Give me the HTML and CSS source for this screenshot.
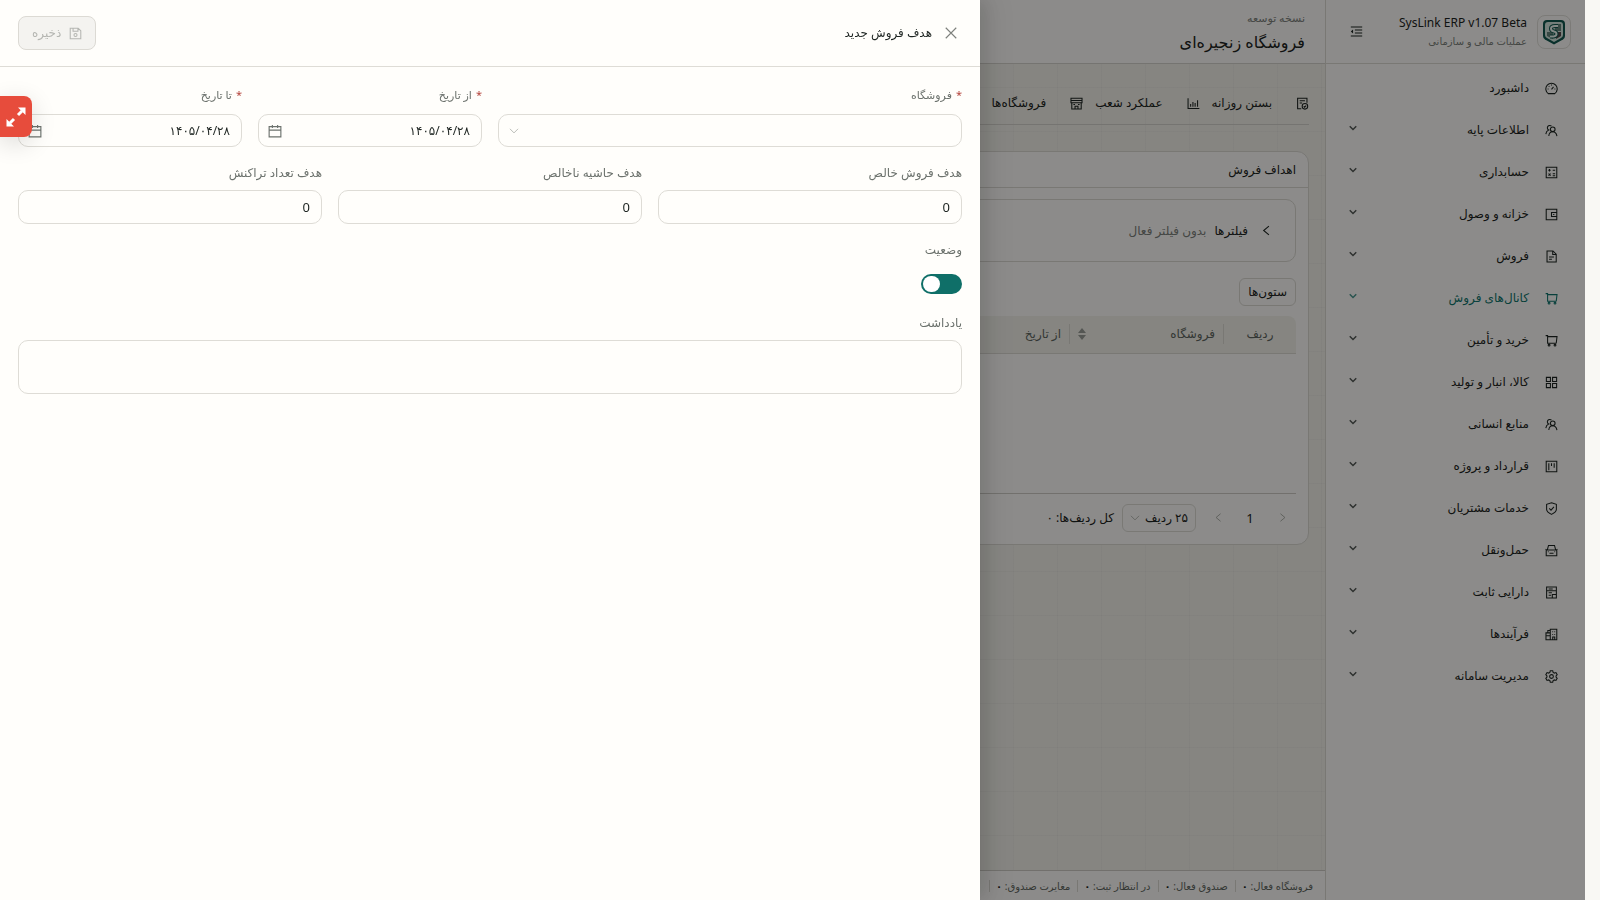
FILE: index.html
```html
<!DOCTYPE html>
<html lang="fa" dir="rtl">
<head>
  <meta charset="UTF-8">
  <title>SysLink ERP</title>
  <link rel="stylesheet" href="styles.css">
</head>
<body>
  <svg class="sprite" aria-hidden="true">
    <symbol id="i-dash" viewBox="0 0 16 16"><path d="M4 14.3a7 7 0 1 1 8 0z"/><path d="M8 9l2.5-3M8 3.2v1.2M3.2 8.5h1.2M11.6 8.5h1.2M4.6 5l.8.8"/></symbol>
    <symbol id="i-team" viewBox="0 0 16 16"><circle cx="9.5" cy="6.5" r="2.9"/><path d="M4.7 14.8c.2-3 2-5.2 4.8-5.2s4.6 2.2 5.2 5.2M8 2.6A3 3 0 1 0 4.5 7.4C2.5 8.2 1.3 10 1 12.5"/></symbol>
    <symbol id="i-calc" viewBox="0 0 16 16"><path d="M1.5 1.5h13v13h-13zM4 5.3h3M5.5 3.8v3M9.5 5.3h3M9.5 9.5h3M9.5 12h3M4.3 9.3l2.6 2.6M6.9 9.3l-2.6 2.6"/></symbol>
    <symbol id="i-wallet" viewBox="0 0 16 16"><path d="M14.5 5V1.5h-13v13h13V11M14.5 5.5v5H8v-5zM10 8h1.5"/></symbol>
    <symbol id="i-file" viewBox="0 0 16 16"><path d="M2.5 1.2h7.3l4 4v9.6H2.5zM9.5 1.5v4h4M5 8.5h6M5 11.3h3.5"/></symbol>
    <symbol id="i-cart" viewBox="0 0 16 16"><path d="M.8 2h2.4v9.5h10.3M3.4 3.2h11.4l-1 8.3"/><circle cx="5" cy="13.7" r="1.1"/><circle cx="12.3" cy="13.7" r="1.1"/></symbol>
    <symbol id="i-grid" viewBox="0 0 16 16"><path d="M1.7 1.7h5v5h-5zM9.3 1.7h5v5h-5zM1.7 9.3h5v5h-5zM9.3 9.3h5v5h-5z"/></symbol>
    <symbol id="i-project" viewBox="0 0 16 16"><path d="M1.5 1.5h13v13h-13zM4.7 4v8.5M8 4v3.5M11.3 4v5.5"/></symbol>
    <symbol id="i-shield" viewBox="0 0 16 16"><path d="M8 .9l6 2v6.3c0 2.3-3 4.5-6 6-3-1.5-6-3.7-6-6V2.9zM5.2 7.8l2.2 2.2 3.6-4"/></symbol>
    <symbol id="i-car" viewBox="0 0 16 16"><path d="M1.5 7.5v7h13v-7zM2.8 7.5l1.5-5.7h7.4l1.5 5.7M5.5 11.5h5M.7 6.5l1.3.8M15.3 6.5l-1.3.8M3.5 9.5h1M11.5 9.5h1"/></symbol>
    <symbol id="i-asset" viewBox="0 0 16 16"><path d="M2 1.2h12v13.6H2zM2 5.8h12M4.5 3.6h5M4.5 8.2h4M4.5 11.5h3M9 14.5v-4h5"/></symbol>
    <symbol id="i-flow" viewBox="0 0 16 16"><path d="M6.5 6V1.5h8v13h-8M1.2 6h5.3v8.5H1.2zM1.2 9.5h5.3M3.5 6V3h3M9 4.5h1M11.5 4.5h1M9 8h1M11.5 8h1M9.5 14v-3h2.5v3"/></symbol>
    <symbol id="i-gear" viewBox="0 0 16 16"><path d="M6.5 1h3l.5 2 1.5.8 2-.6 1.5 2.6L13.6 7.2v1.6l1.4 1.4-1.5 2.6-2-.6-1.500.8-.5 2h-3L6 13l-1.500-.8-2 .6L1 10.200l1.400-1.400V7.200L1 5.800l1.500-2.600 2 .6L6 3z"/><circle cx="8" cy="8" r="2.300"/></symbol>
    <symbol id="i-down" viewBox="0 0 16 16"><path d="M1.5 4.5L8 11l6.5-6.5"/></symbol>
    <symbol id="i-left" viewBox="0 0 16 16"><path d="M11 2.5L4.500 8l6.500 5.500"/></symbol>
    <symbol id="i-right" viewBox="0 0 16 16"><path d="M5 2.5L11.500 8 5 13.500"/></symbol>
    <symbol id="i-close" viewBox="0 0 16 16"><path d="M2 2l12 12M14 2L2 14"/></symbol>
    <symbol id="i-fold" viewBox="0 0 16 16"><path d="M1 2.5h14M6 6.2h9M6 9.8h9M1 13.5h14"/><path class="solid" d="M3.800 5.500v5L1 8z"/></symbol>
    <symbol id="i-daily" viewBox="0 0 16 16"><path d="M6.5 14.5H2v-13h11.500V7M4.500 4.500h6.500M4.500 7.500h3"/><circle cx="11" cy="11.500" r="3.400"/><path d="M9.500 11.500l1 1 2-2"/></symbol>
    <symbol id="i-chart" viewBox="0 0 16 16"><path d="M1.3 1.5v12.700h13.900M4.500 12V8.500M7.300 12V6M10 12V7.500M13 12V4"/></symbol>
    <symbol id="i-shop" viewBox="0 0 16 16"><path d="M1.2 1.5h13.600v5.500H1.200zM2.200 7v7.700h11.600V7M1.200 4.200h13.600M6.200 14.500v-3h3.600v3M4.200 9.200h2M9.800 9.200h2"/></symbol>
    <symbol id="i-cal" viewBox="0 0 16 16"><path d="M1.3 3h13.400v11.700H1.300zM1.300 7h13.400M5 1v3.500M11 1v3.500"/></symbol>
    <symbol id="i-save" viewBox="0 0 16 16"><path d="M1.5 1.5h9.800l3.200 3.200v9.800h-13zM5 1.500v3.700h6V1.500"/><circle cx="8" cy="9.800" r="1.900"/></symbol>
  </svg>

  <div class="app">
    <aside class="sidebar">
      <div class="brand">
        <div class="logo">
          <svg viewBox="0 0 24 26">
            <path d="M5 1h14q4 0 4 4v12q0 2-2 3.500L12 25.500 3 20.500Q1 19 1 17V5q0-4 4-4z" fill="#11584f"/>
            <path d="M6 3h12q3 0 3 3v10q0 2-2 3l-7 4-7-4q-2-1-2-3V6q0-3 3-3z" fill="#d3e6de"/>
            <path d="M13 5h6v7h-6zM5 13h6v7l-6-3z" fill="#65857c"/>
            <path d="M14 13h5v4l-5 3z" fill="#55484a"/>
            <path d="M16 7h-3q-4 0-4 2.500t3 3q2.500.5 2.500 2.500t-3 2.500H8" fill="none" stroke="#11584f" stroke-width="4"/>
            <path d="M16 7h-3q-4 0-4 2.500t3 3q2.500.5 2.500 2.500t-3 2.500H8" fill="none" stroke="#eef8f3" stroke-width="2"/>
          </svg>
        </div>
        <div class="brand-text">
          <strong dir="ltr">SysLink ERP v1.07 Beta</strong>
          <span>عملیات مالی و سازمانی</span>
        </div>
        <button class="icon-btn" aria-label="بستن منو"><svg class="icon"><use href="#i-fold"/></svg></button>
      </div>
      <nav class="menu">
        <a href="#"><svg class="icon"><use href="#i-dash"/></svg><span>داشبورد</span></a>
        <a href="#"><svg class="icon"><use href="#i-team"/></svg><span>اطلاعات پایه</span><svg class="arrow"><use href="#i-down"/></svg></a>
        <a href="#"><svg class="icon"><use href="#i-calc"/></svg><span>حسابداری</span><svg class="arrow"><use href="#i-down"/></svg></a>
        <a href="#"><svg class="icon"><use href="#i-wallet"/></svg><span>خزانه و وصول</span><svg class="arrow"><use href="#i-down"/></svg></a>
        <a href="#"><svg class="icon"><use href="#i-file"/></svg><span>فروش</span><svg class="arrow"><use href="#i-down"/></svg></a>
        <a href="#" class="active"><svg class="icon"><use href="#i-cart"/></svg><span>کانال‌های فروش</span><svg class="arrow"><use href="#i-down"/></svg></a>
        <a href="#"><svg class="icon"><use href="#i-cart"/></svg><span>خرید و تأمین</span><svg class="arrow"><use href="#i-down"/></svg></a>
        <a href="#"><svg class="icon"><use href="#i-grid"/></svg><span>کالا، انبار و تولید</span><svg class="arrow"><use href="#i-down"/></svg></a>
        <a href="#"><svg class="icon"><use href="#i-team"/></svg><span>منابع انسانی</span><svg class="arrow"><use href="#i-down"/></svg></a>
        <a href="#"><svg class="icon"><use href="#i-project"/></svg><span>قرارداد و پروژه</span><svg class="arrow"><use href="#i-down"/></svg></a>
        <a href="#"><svg class="icon"><use href="#i-shield"/></svg><span>خدمات مشتریان</span><svg class="arrow"><use href="#i-down"/></svg></a>
        <a href="#"><svg class="icon"><use href="#i-car"/></svg><span>حمل‌ونقل</span><svg class="arrow"><use href="#i-down"/></svg></a>
        <a href="#"><svg class="icon"><use href="#i-asset"/></svg><span>دارایی ثابت</span><svg class="arrow"><use href="#i-down"/></svg></a>
        <a href="#"><svg class="icon"><use href="#i-flow"/></svg><span>فرآیندها</span><svg class="arrow"><use href="#i-down"/></svg></a>
        <a href="#"><svg class="icon"><use href="#i-gear"/></svg><span>مدیریت سامانه</span><svg class="arrow"><use href="#i-down"/></svg></a>
      </nav>
    </aside>

    <div class="page">
      <header class="topbar">
        <span>نسخه توسعه</span>
        <h1>فروشگاه زنجیره‌ای</h1>
      </header>

      <main class="content">
        <nav class="tabs">
          <a href="#"><svg class="icon"><use href="#i-daily"/></svg>بستن روزانه</a>
          <a href="#"><svg class="icon"><use href="#i-chart"/></svg>عملکرد شعب</a>
          <a href="#"><svg class="icon"><use href="#i-shop"/></svg>فروشگاه‌ها</a>
        </nav>

        <section class="card">
          <h2>اهداف فروش</h2>
          <div class="card-body">
            <button class="filters">
              <svg class="icon"><use href="#i-left"/></svg>
              <b>فیلترها</b>
              <span>بدون فیلتر فعال</span>
            </button>
            <button class="columns-btn">ستون‌ها</button>
            <table>
              <thead>
                <tr>
                  <th class="col-row">ردیف</th>
                  <th class="col-shop"><div>فروشگاه <svg class="sorter" viewBox="0 0 8 12"><path d="M4 0l4 5H0zM4 12L0 7h8z"/></svg></div></th>
                  <th>از تاریخ</th>
                </tr>
              </thead>
              <tbody>
                <tr><td colspan="3"></td></tr>
              </tbody>
            </table>
            <div class="pager">
              <button class="page-btn" disabled aria-label="قبلی"><svg class="icon"><use href="#i-right"/></svg></button>
              <button class="page-btn">1</button>
              <button class="page-btn" disabled aria-label="بعدی"><svg class="icon"><use href="#i-left"/></svg></button>
              <div class="select-box small">
                <select aria-label="تعداد ردیف"><option>۲۵ ردیف</option></select>
                <svg><use href="#i-down"/></svg>
              </div>
              <span>کل ردیف‌ها: ۰</span>
            </div>
          </div>
        </section>
      </main>

      <footer class="statusbar">
        <span>فروشگاه فعال: <b>۰</b></span>
        <span>صندوق فعال: <b>۰</b></span>
        <span>در انتظار ثبت: <b>۰</b></span>
        <span>مغایرت صندوق: <b>۰</b></span>
        <span></span>
      </footer>
    </div>
  </div>

  <div class="mask"></div>

  <form class="drawer">
    <div class="drawer-head">
      <button type="button" class="close" aria-label="بستن"><svg class="icon"><use href="#i-close"/></svg></button>
      <h2>هدف فروش جدید</h2>
      <button class="save" disabled><svg class="icon"><use href="#i-save"/></svg>ذخیره</button>
    </div>
    <div class="fields">
      <div class="field half">
        <label class="required" for="shop">فروشگاه</label>
        <div class="select-box">
          <select id="shop"><option></option></select>
          <svg><use href="#i-down"/></svg>
        </div>
      </div>
      <div class="field quarter">
        <label class="required" for="from">از تاریخ</label>
        <div class="date-box">
          <input id="from" type="text" value="۱۴۰۵/۰۴/۲۸">
          <svg class="icon"><use href="#i-cal"/></svg>
        </div>
      </div>
      <div class="field quarter">
        <label class="required" for="to">تا تاریخ</label>
        <div class="date-box">
          <input id="to" type="text" value="۱۴۰۵/۰۴/۲۸">
          <svg class="icon"><use href="#i-cal"/></svg>
        </div>
      </div>
      <div class="field third">
        <label for="net">هدف فروش خالص</label>
        <input id="net" class="number" type="text" value="0">
      </div>
      <div class="field third">
        <label for="margin">هدف حاشیه ناخالص</label>
        <input id="margin" class="number" type="text" value="0">
      </div>
      <div class="field third">
        <label for="count">هدف تعداد تراکنش</label>
        <input id="count" class="number" type="text" value="0">
      </div>
      <div class="field">
        <label for="status">وضعیت</label>
        <input id="status" class="switch" type="checkbox" role="switch" checked>
      </div>
      <div class="field">
        <label for="note">یادداشت</label>
        <textarea id="note" rows="2"></textarea>
      </div>
    </div>
  </form>

  <button class="expand" aria-label="تمام صفحه">
    <svg viewBox="0 0 22 22"><path d="M13 9l4-4M9 13l-4 4"/><path class="solid" d="M13 1.5h7.5V9zM1.5 13v7.5H9z"/></svg>
  </button>
</body>
</html>
```

FILE: styles.css
```css
* {
  box-sizing: border-box;
}

body {
  margin: 0;
  padding-right: 15px;
  background: #f9f8f4;
  color: #1d2421;
  font-family: "Noto Sans", "DejaVu Sans", sans-serif;
  font-size: 12px;
  line-height: 20px;
  overflow: hidden;
}

button,
input,
select,
textarea {
  font: inherit;
  color: inherit;
}

button {
  padding: 0;
  border: 0;
  background: none;
}

a {
  color: inherit;
  text-decoration: none;
}

h1,
h2 {
  margin: 0;
  font-weight: 400;
}

svg {
  fill: none;
  stroke: currentColor;
  stroke-width: 1.3;
}

.solid {
  fill: currentColor;
  stroke: none;
}

.sprite {
  display: none;
}

.icon {
  flex: none;
  width: 13px;
  height: 13px;
}

.app {
  display: flex;
  height: 100vh;
}

/* sidebar */
.sidebar {
  flex: none;
  width: 260px;
  background: #fffefb;
  border-left: 1px solid #dcdad4;
}

.brand {
  display: flex;
  align-items: center;
  gap: 10px;
  height: 64px;
  padding: 0 14px 0 24px;
  border-bottom: 1px solid #dcdad4;
}

.logo {
  display: flex;
  align-items: center;
  justify-content: center;
  width: 34px;
  height: 34px;
  border: 1px solid #e2e0da;
  border-radius: 8px;
}

.logo svg {
  width: 24px;
  height: 26px;
  stroke: none;
}

.brand-text {
  display: flex;
  flex: 1;
  flex-direction: column;
}

.brand-text strong {
  font-weight: 400;
  line-height: 18px;
  text-align: right;
}

.brand-text span {
  color: #7d817c;
  font-size: 10px;
  line-height: 18px;
}

.icon-btn {
  display: flex;
}

.menu {
  display: flex;
  flex-direction: column;
  gap: 2px;
  padding: 4px 27px 0 23px;
}

.menu a {
  display: flex;
  align-items: center;
  gap: 16px;
  height: 40px;
}

.menu span {
  flex: 1;
}

.menu .active {
  color: #0f766e;
}

.arrow {
  width: 8px;
  height: 8px;
  margin-bottom: 4px;
  stroke-width: 3;
  opacity: 0.75;
}

/* page */
.page {
  display: flex;
  flex: 1;
  flex-direction: column;
  min-width: 0;
}

.topbar {
  height: 64px;
  padding: 8px 20px 0;
  background: #fffefb;
  border-bottom: 1px solid #d6d4ce;
}

.topbar span {
  display: block;
  color: #7d817c;
  font-size: 11px;
  line-height: 20px;
}

.topbar h1 {
  font-size: 16px;
  line-height: 28px;
}

.content {
  flex: 1;
  padding: 18px 16px;
  background-color: #f4f3ec;
  background-image:
    linear-gradient(90deg, rgba(60, 60, 50, 0.03) 1px, transparent 1px),
    linear-gradient(rgba(60, 60, 50, 0.03) 1px, transparent 1px);
  background-size: 44px 44px;
  background-position: 1px 23px;
}

.tabs {
  display: flex;
  gap: 12px;
  height: 43px;
  border-bottom: 1px solid #d6d4ce;
}

.tabs a {
  display: flex;
  align-items: center;
  gap: 24px;
}

.card {
  margin-top: 26px;
  background: #fffefb;
  border: 1px solid #dcdad4;
  border-radius: 12px;
}

.card h2 {
  padding: 8px 12px 7px;
  border-bottom: 1px solid #dcdad4;
  font-size: 12px;
}

.card-body {
  display: flex;
  flex-direction: column;
  padding: 11px 12px 12px;
}

.filters {
  display: flex;
  align-items: center;
  gap: 8px;
  height: 63px;
  padding: 0 22px;
  border: 1px solid #dcdad4;
  border-radius: 10px;
}

.filters .icon {
  margin-left: 4px;
}

.filters b {
  font-weight: 500;
}

.filters span {
  color: #7d817c;
}

.columns-btn {
  align-self: flex-start;
  height: 28px;
  margin: 16px 0 10px;
  padding: 0 8px;
  border: 1px solid #dcdad4;
  border-radius: 6px;
}

table {
  width: 100%;
  border-collapse: collapse;
  table-layout: fixed;
}

th {
  height: 37px;
  padding: 0 8px;
  background: #f4f3ec;
  border-bottom: 1px solid #dcdad4;
  color: #5f6661;
  font-weight: 400;
  text-align: right;
}

th:first-child {
  border-radius: 0 8px 0 0;
}

.col-row {
  width: 72px;
  text-align: center;
}

.col-shop {
  width: 155px;
}

.col-shop div {
  display: flex;
  align-items: center;
  justify-content: space-between;
  margin: 0 -8px;
  padding: 0 8px;
  border: solid #dcdad4;
  border-width: 0 1px;
}

.sorter {
  width: 8px;
  height: 12px;
  fill: #9a9d98;
  stroke: none;
}

td {
  height: 140px;
  padding: 0;
  border-bottom: 1px solid #cfcdc7;
}

.pager {
  display: flex;
  align-items: center;
  gap: 8px;
  padding-top: 10px;
}

.page-btn {
  display: flex;
  align-items: center;
  justify-content: center;
  width: 28px;
  height: 28px;
  font-size: 13px;
}

.page-btn:nth-child(-n+2) {
  margin-left: -4px;
}

.page-btn:disabled {
  color: #a5a7a2;
}

.page-btn .icon {
  width: 11px;
  height: 11px;
}

.statusbar {
  display: flex;
  align-items: center;
  height: 30px;
  padding: 0 12px;
  background: #fffefb;
  border-top: 1px solid #cfcdc7;
  color: #5f6661;
  font-size: 10px;
}

.statusbar span + span {
  margin-right: 6px;
  padding-right: 7px;
  border-right: 1px solid #dcdad4;
  line-height: 12px;
}

.statusbar span:last-child {
  height: 12px;
}

.statusbar b {
  color: #1d2421;
}

/* form controls */
.select-box,
.date-box {
  position: relative;
}

select,
input[type="text"],
textarea {
  display: block;
  width: 100%;
  height: 33px;
  padding: 0 11px;
  background: #fffefb;
  border: 1px solid #dedcd6;
  border-radius: 10px;
  outline: 0;
}

input.number[type="text"] {
  height: 34px;
  font-size: 13px;
}

select {
  appearance: none;
}

.select-box svg {
  position: absolute;
  top: 12px;
  left: 11px;
  width: 10px;
  height: 10px;
  color: #aaaca8;
}

.date-box .icon {
  position: absolute;
  top: 10px;
  left: 10px;
  width: 14px;
  height: 14px;
  color: #6c726d;
}

.small {
  width: 74px;
}

.small select {
  height: 28px;
  padding: 0 7px;
  border-radius: 6px;
}

.small svg {
  top: 9px;
  left: 8px;
}

/* drawer */
.mask {
  position: fixed;
  inset: 0 15px 0 0;
  background: rgba(0, 0, 0, 0.45);
}

.drawer {
  position: fixed;
  top: 0;
  bottom: 0;
  left: 0;
  width: 980px;
  max-width: 100%;
  background: #fffefb;
  box-shadow: 6px 0 16px rgba(0, 0, 0, 0.1), 9px 0 28px 8px rgba(0, 0, 0, 0.06);
}

.drawer-head {
  display: flex;
  align-items: center;
  height: 67px;
  padding: 0 22px 0 18px;
  border-bottom: 1px solid #dedcd6;
}

.drawer-head h2 {
  flex: 1;
  font-size: 12px;
}

.close {
  display: flex;
  margin-left: 12px;
  color: #7d817c;
}

.close .icon {
  width: 14px;
  height: 14px;
}

.save {
  display: flex;
  align-items: center;
  gap: 8px;
  height: 34px;
  padding: 0 13px;
  background: #f4f3f0;
  border: 1px solid #dcdad4;
  border-radius: 8px;
  color: #b5b6b2;
}

.fields {
  display: grid;
  grid-template-columns: repeat(12, 1fr);
  gap: 16px;
  padding: 18px;
}

.field {
  grid-column: span 12;
}

.half {
  grid-column: span 6;
}

.quarter {
  grid-column: span 3;
}

.third {
  grid-column: span 4;
}

.field label {
  display: block;
  margin-bottom: 8px;
  color: #6c726d;
  line-height: 19px;
}

.field .required {
  margin-bottom: 10px;
  font-size: 11px;
}

.required::before {
  content: "*";
  margin-left: 4px;
  color: #b4443c;
}

.switch {
  display: block;
  width: 41px;
  height: 20px;
  margin: 15px 0 3px;
  padding: 2px;
  appearance: none;
  background: #0f6f68;
  border-radius: 10px;
}

.switch::before {
  content: "";
  display: block;
  width: 17px;
  height: 16px;
  margin-right: auto;
  background: #fff;
  border-radius: 8px;
}

textarea {
  height: 54px;
  resize: none;
}

.expand {
  position: fixed;
  top: 96px;
  left: 0;
  display: flex;
  align-items: center;
  justify-content: center;
  width: 32px;
  height: 41px;
  background: #e74c3c;
  border-radius: 0 8px 8px 0;
  box-shadow: 0 6px 24px rgba(0, 0, 0, 0.14);
  color: #fff;
}

.expand svg {
  width: 22px;
  height: 22px;
  stroke-width: 3;
}
```
